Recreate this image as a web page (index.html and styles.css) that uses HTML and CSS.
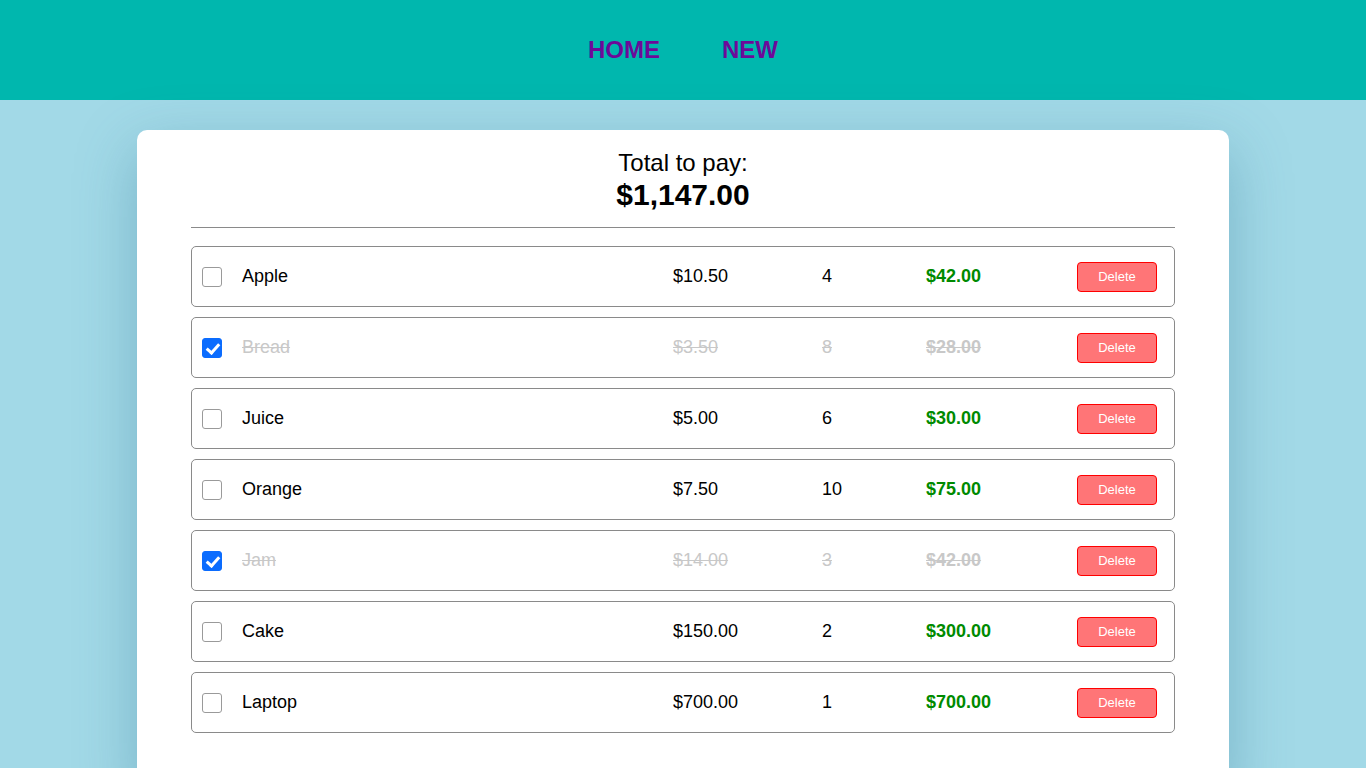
FILE: index.html
```html
<!DOCTYPE html>
<html lang="en">
<head>
<meta charset="utf-8">
<title>Shopping list</title>
<link rel="stylesheet" href="styles.css">
</head>
<body>
<header class="topbar">
  <nav class="nav">
    <a class="nav-link" href="#">HOME</a>
    <a class="nav-link" href="#">NEW</a>
  </nav>
</header>
<main class="main">
  <section class="card">
    <div class="summary">
      <p class="summary-label">Total to pay:</p>
      <p class="summary-amount">$1,147.00</p>
    </div>
    <hr class="divider">
    <ul class="list">
      <li class="item">
        <input class="check" type="checkbox">
        <span class="name">Apple</span>
        <span class="price">$10.50</span>
        <span class="qty">4</span>
        <span class="total">$42.00</span>
        <button class="delete">Delete</button>
      </li>
      <li class="item done">
        <input class="check" type="checkbox" checked>
        <span class="name">Bread</span>
        <span class="price">$3.50</span>
        <span class="qty">8</span>
        <span class="total">$28.00</span>
        <button class="delete">Delete</button>
      </li>
      <li class="item">
        <input class="check" type="checkbox">
        <span class="name">Juice</span>
        <span class="price">$5.00</span>
        <span class="qty">6</span>
        <span class="total">$30.00</span>
        <button class="delete">Delete</button>
      </li>
      <li class="item">
        <input class="check" type="checkbox">
        <span class="name">Orange</span>
        <span class="price">$7.50</span>
        <span class="qty">10</span>
        <span class="total">$75.00</span>
        <button class="delete">Delete</button>
      </li>
      <li class="item done">
        <input class="check" type="checkbox" checked>
        <span class="name">Jam</span>
        <span class="price">$14.00</span>
        <span class="qty">3</span>
        <span class="total">$42.00</span>
        <button class="delete">Delete</button>
      </li>
      <li class="item">
        <input class="check" type="checkbox">
        <span class="name">Cake</span>
        <span class="price">$150.00</span>
        <span class="qty">2</span>
        <span class="total">$300.00</span>
        <button class="delete">Delete</button>
      </li>
      <li class="item">
        <input class="check" type="checkbox">
        <span class="name">Laptop</span>
        <span class="price">$700.00</span>
        <span class="qty">1</span>
        <span class="total">$700.00</span>
        <button class="delete">Delete</button>
      </li>
    </ul>
  </section>
</main>
</body>
</html>
```

FILE: styles.css
```css
* { box-sizing: border-box; }

html, body {
  margin: 0;
  padding: 0;
}

body {
  background: #a2d9e7;
  font-family: "Liberation Sans", Arial, sans-serif;
  color: #000;
  overflow: hidden;
}

.topbar {
  height: 100px;
  background: #00b7ae;
  display: flex;
  align-items: center;
  justify-content: center;
}

.nav {
  display: flex;
  gap: 62px;
}

.nav-link {
  color: #6c0a99;
  font-weight: bold;
  font-size: 24px;
  line-height: 28px;
  text-decoration: none;
}

.main {
  padding: 30px 137px 0;
}

.card {
  background: #fff;
  border-radius: 10px;
  padding: 19px 54px 40px;
  box-shadow: 0 20px 60px rgba(40, 110, 140, 0.35);
  min-height: 660px;
}

.summary {
  text-align: center;
}

.summary-label {
  margin: 0;
  font-size: 24px;
  line-height: 28px;
}

.summary-amount {
  margin: 0;
  font-size: 30px;
  line-height: 36px;
  font-weight: bold;
}

.divider {
  margin: 14px 0 18px;
  border: 0;
  border-top: 1px solid #8a8a8a;
  height: 0;
}

.list {
  list-style: none;
  margin: 0;
  padding: 0;
  display: flex;
  flex-direction: column;
  gap: 10px;
}

.item {
  height: 61px;
  border: 1px solid #8a8a8a;
  border-radius: 5px;
  padding: 0 17px 0 10px;
  display: grid;
  grid-template-columns: 20px 1fr 149px 104px 151px 80px;
  align-items: center;
  font-size: 18px;
}

.check {
  appearance: none;
  -webkit-appearance: none;
  margin: 0;
  width: 20px;
  height: 20px;
  border: 1px solid #9a9a9a;
  border-radius: 3px;
  background: #fff;
  position: relative;
}

.check:checked {
  background: #0b6cfe;
  border-color: #0b6cfe;
}

.check:checked::after {
  content: "";
  position: absolute;
  left: 6px;
  top: 2px;
  width: 5px;
  height: 10px;
  border: solid #fff;
  border-width: 0 3px 3px 0;
  transform: rotate(42deg);
}

.name {
  padding-left: 20px;
}

.total {
  font-weight: bold;
  color: #008a00;
}

.done .name,
.done .price,
.done .qty,
.done .total {
  color: #c8c8c8;
  text-decoration: line-through;
}

.delete {
  width: 80px;
  height: 30px;
  background: #ff7577;
  border: 1px solid #ff0000;
  border-radius: 4px;
  color: #fff;
  font-family: "Liberation Sans", Arial, sans-serif;
  font-size: 13px;
  padding: 0;
}
```
